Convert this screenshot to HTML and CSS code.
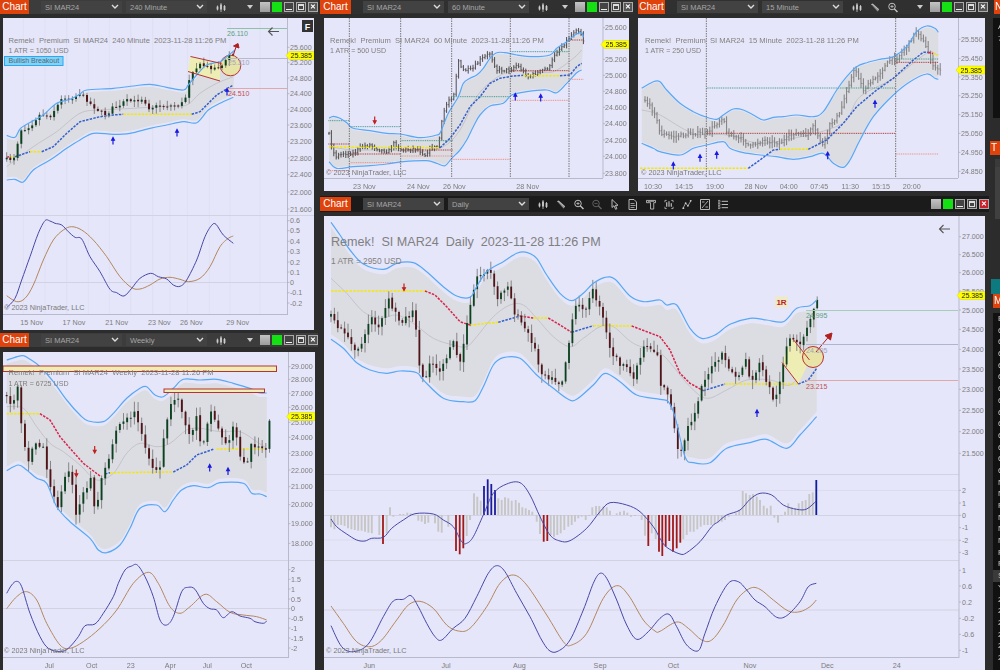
FILE: index.html
```html
<!DOCTYPE html>
<html lang="en">
<head>
<meta charset="utf-8">
<title>SI MAR24 charts</title>
<link rel="stylesheet" href="styles.css">
</head>
<body>
<svg class="sprite" aria-hidden="true">
  <symbol id="i-bars" viewBox="0 0 10 10"><path d="M1.5 3v5M5 .5v9M8.5 2.5v6" stroke="#ccc" fill="none" stroke-width=".8"/><path d="M.6 4h1.8v3H.6zM4.1 2h1.8v5H4.1zM7.6 3.5h1.8v4H7.6z" fill="#ccc"/></symbol>
  <symbol id="i-pencil" viewBox="0 0 11 10"><path d="M1 1.5l2-1 7 6.5-1.5 2.5z" fill="#bbb"/><path d="M2 2l7 6.5" stroke="#333" stroke-width=".6"/></symbol>
  <symbol id="i-plus" viewBox="0 0 11 11"><circle cx="4.4" cy="4.4" r="3.6" fill="none" stroke="#ccc"/><path d="M2.6 4.4h3.6M4.4 2.6v3.6" stroke="#ccc" stroke-width=".8"/><path d="M7 7l3.4 3.4" stroke="#ccc" stroke-width="1.5"/></symbol>
  <symbol id="i-minus" viewBox="0 0 11 11"><circle cx="4.4" cy="4.4" r="3.6" fill="none" stroke="#666"/><path d="M2.6 4.4h3.6" stroke="#666" stroke-width=".8"/><path d="M7 7l3.4 3.4" stroke="#666" stroke-width="1.5"/></symbol>
  <symbol id="i-cursor" viewBox="0 0 8 11"><path d="M1 .5v8l2-1.8 1.6 3.6 1.3-.6-1.5-3.4h2.6z" fill="none" stroke="#ccc" stroke-width=".9"/></symbol>
  <symbol id="i-doc" viewBox="0 0 10 11"><path d="M1 .5h5l2.5 2.5v7.5H1z" fill="none" stroke="#ccc" stroke-width=".9"/><path d="M2.5 4.5h4M2.5 6.5h5M2.5 8.5h4" stroke="#ccc" stroke-width=".7"/></symbol>
  <symbol id="i-prop" viewBox="0 0 11 11"><path d="M.5 1h10v2.5h-2v7H5v-7H.5z" fill="none" stroke="#ccc" stroke-width=".9"/><path d="M2 2.2h7" stroke="#ccc" stroke-width=".7"/></symbol>
  <symbol id="i-frame" viewBox="0 0 11 11"><path d="M1 3V1h2M8 1h2v2M10 8v2H8M3 10H1V8" fill="none" stroke="#ccc" stroke-width=".8"/><path d="M3 3v5M5.5 2v6M8 4v4" stroke="#ccc" stroke-width="1.2"/></symbol>
  <symbol id="i-line" viewBox="0 0 11 11"><path d="M1 10l3-6 2.5 3L10 1" fill="none" stroke="#ccc" stroke-width=".8"/><circle cx="1.5" cy="9.5" r="1" fill="#ccc"/><circle cx="4" cy="4" r="1" fill="#ccc"/><circle cx="6.5" cy="7" r="1" fill="#ccc"/><circle cx="9.5" cy="1.5" r="1" fill="#ccc"/></symbol>
  <symbol id="i-calc" viewBox="0 0 10 11"><path d="M.5.5h9v10h-9z" fill="none" stroke="#ccc" stroke-width=".9"/><path d="M2 9l6-7M2 3h2.5M5.5 8h2.5" stroke="#ccc" stroke-width=".8"/></symbol>
  <symbol id="i-list" viewBox="0 0 11 11"><path d="M0 1h2.2v2H0zM0 4.5h2.2v2H0zM0 8h2.2v2H0z" fill="none" stroke="#ccc" stroke-width=".7"/><path d="M4 2h7M4 5.5h7M4 9h7" stroke="#ccc" stroke-width="1"/></symbol>
  <symbol id="i-chev" viewBox="0 0 8 6"><path d="M1 1l3 3 3-3" fill="none" stroke="#ddd" stroke-width="1.4"/></symbol>
</svg>

<main class="desk">

  <section class="win w1">
    <header class="tb tb-grey">
      <span class="tab">Chart</span>
      <span class="sel sel-first"><span>SI MAR24</span><svg class="chev"><use href="#i-chev"/></svg></span>
      <span class="sel"><span>240 Minute</span><svg class="chev"><use href="#i-chev"/></svg></span>
      <svg class="ico ico-first"><use href="#i-bars"/></svg>
      <span class="winbtns">
        <span class="drop"></span><span class="b b-grey"></span><span class="b b-green"></span><span class="b b-min"></span><span class="b b-max"></span><span class="b b-close">✕</span>
      </span>
    </header>
    <div class="panel"><svg id="c1" width="311" height="309" viewBox="3 18 311 309"></svg></div>
  </section>

  <section class="win w2">
    <header class="tb tb-mid">
      <span class="tab tab-wide">Chart</span>
      <span class="sel sel-first"><span>SI MAR24</span><svg class="chev"><use href="#i-chev"/></svg></span>
      <span class="sel"><span>60 Minute</span><svg class="chev"><use href="#i-chev"/></svg></span>
      <svg class="ico ico-first"><use href="#i-bars"/></svg>
      <span class="winbtns">
        <span class="drop"></span><span class="b b-grey"></span><span class="b b-green"></span><span class="b b-min"></span><span class="b b-max"></span><span class="b b-close">✕</span>
      </span>
    </header>
    <div class="panel"><svg id="c2" width="305" height="172" viewBox="324 18 305 172"></svg></div>
  </section>

  <section class="win w3">
    <header class="tb tb-mid">
      <span class="tab tab-narrow">Chart</span>
      <span class="sel sel-first"><span>SI MAR24</span><svg class="chev"><use href="#i-chev"/></svg></span>
      <span class="sel"><span>15 Minute</span><svg class="chev"><use href="#i-chev"/></svg></span>
      <svg class="ico ico-first"><use href="#i-bars"/></svg>
      <svg class="ico"><use href="#i-pencil"/></svg>
      <svg class="ico"><use href="#i-plus"/></svg>
      <span class="winbtns">
        <span class="drop"></span><span class="b b-grey"></span><span class="b b-green"></span><span class="b b-min"></span><span class="b b-max"></span><span class="b b-close">✕</span>
      </span>
    </header>
    <div class="panel"><svg id="c3" width="347" height="172" viewBox="638 18 347 172"></svg></div>
  </section>

  <section class="win w4">
    <header class="tb tb-dark">
      <span class="tab tab-wide">Chart</span>
      <span class="sel sel-first"><span>SI MAR24</span><svg class="chev"><use href="#i-chev"/></svg></span>
      <span class="sel"><span>Daily</span><svg class="chev"><use href="#i-chev"/></svg></span>
      <svg class="ico ico-first"><use href="#i-bars"/></svg>
      <svg class="ico"><use href="#i-pencil"/></svg>
      <svg class="ico"><use href="#i-plus"/></svg>
      <svg class="ico"><use href="#i-minus"/></svg>
      <svg class="ico"><use href="#i-cursor"/></svg>
      <svg class="ico"><use href="#i-doc"/></svg>
      <svg class="ico"><use href="#i-prop"/></svg>
      <svg class="ico"><use href="#i-frame"/></svg>
      <svg class="ico"><use href="#i-line"/></svg>
      <svg class="ico"><use href="#i-calc"/></svg>
      <svg class="ico"><use href="#i-list"/></svg>
      <span class="winbtns">
        <span class="b b-grey"></span><span class="b b-green"></span><span class="b b-min"></span><span class="b b-max"></span><span class="b b-close b-red">✕</span>
      </span>
    </header>
    <div class="panel"><svg id="c4" width="661" height="454" viewBox="324 216 661 454"></svg></div>
  </section>

  <section class="win w5">
    <header class="tb tb-grey">
      <span class="tab">Chart</span>
      <span class="sel sel-first"><span>SI MAR24</span><svg class="chev"><use href="#i-chev"/></svg></span>
      <span class="sel"><span>Weekly</span><svg class="chev"><use href="#i-chev"/></svg></span>
      <svg class="ico ico-first"><use href="#i-bars"/></svg>
      <span class="winbtns">
        <span class="drop"></span><span class="b b-grey"></span><span class="b b-green"></span><span class="b b-min"></span><span class="b b-max"></span><span class="b b-close">✕</span>
      </span>
    </header>
    <div class="panel"><svg id="c5" width="312" height="318" viewBox="3 352 312 318"></svg></div>
  </section>

  <aside class="side">
    <div class="side-tab">N</div>
    <div class="side-box"><div class="row">A</div><div class="row">7</div></div>
    <div class="side-tab side-t">T</div>
    <div class="side-grey"></div>
    <div class="side-teal"></div>
    <div class="side-tab side-m">M</div>
    <div class="side-list">
      <div class="row">E</div><div class="row">6</div><div class="row">6</div><div class="row">6</div><div class="row">6</div><div class="row">6</div><div class="row">6</div><div class="row">6</div><div class="row">6</div><div class="row">6</div><div class="row">6</div><div class="row">6</div><div class="row">6</div><div class="row">6</div>
      <div class="row">N</div><div class="row">N</div><div class="row">R</div><div class="row">N</div><div class="row">N</div><div class="row">N</div><div class="row">R</div><div class="row">R</div><div class="row row-sel">S</div><div class="row">Y</div><div class="row">2</div><div class="row">2</div><div class="row">2</div><div class="row">2</div><div class="row">2</div><div class="row">2</div>
    </div>
  </aside>

</main>
<script src="script.js"></script>
</body>
</html>
```
FILE: styles.css
```css
* { box-sizing: border-box; }
html, body { margin: 0; padding: 0; height: 100%; overflow: hidden; background: #2c2c2c; }
body { font-family: "Liberation Sans", Arial, sans-serif; }
.sprite { position: absolute; width: 0; height: 0; }

.desk { position: relative; width: 1000px; height: 670px; overflow: hidden; filter: blur(.4px); }

.win { position: absolute; display: flex; flex-direction: column; }
.w1 { left: 0; top: 0; width: 318px; height: 330px; }
.w2 { left: 320px; top: 0; width: 313px; height: 191px; }
.w3 { left: 638px; top: 0; width: 350px; height: 191px; }
.w4 { left: 320px; top: 196px; width: 669px; height: 474px; }
.w5 { left: 0; top: 333px; width: 318px; height: 337px; }

.tb { height: 14px; flex: none; display: flex; align-items: center; }
.tb-grey { background: #3c3c3c; }
.tb-mid { background: #303030; }
.tb-dark { background: #1b1b1b; height: 16px; }
.w4 .tb { margin-bottom: 4px; }
.w1 .tb, .w2 .tb, .w3 .tb { margin-bottom: 4px; }
.w5 .tb { margin-bottom: 5px; }

.tab { flex: none; width: 29px; height: 14px; background: #e0420c; color: #fff; font-size: 10px; line-height: 14px; text-align: center; }
.tab-wide { width: 31px; }
.tab-narrow { width: 27px; }

.sel { flex: none; width: 81px; height: 12px; margin-left: 4px; padding: 0 3px 0 4px; background: #424242; color: #a6a6a6; font-size: 7.5px; display: flex; align-items: center; justify-content: space-between; }
.sel-first { margin-left: 12px; }
.chev { width: 8px; height: 6px; flex: none; }

.ico { width: 10px; height: 11px; flex: none; margin-left: 8px; }
.ico-first { margin-left: 9px; }

.winbtns { margin-left: auto; display: flex; align-items: center; gap: 2px; }
.drop { width: 0; height: 0; border: 3px solid transparent; border-top: 4px solid #ccc; border-bottom: 0; margin-right: 5px; }
.b { width: 10px; height: 10px; flex: none; position: relative; color: #fff; font-size: 8px; line-height: 10px; text-align: center; }
.b-grey { background: linear-gradient(#c4c4c4, #9c9c9c); }
.b-green { background: #14e014; }
.b-min, .b-max { background: #444; border: 1px solid #aaa; }
.b-min::after { content: ""; position: absolute; left: 1px; right: 1px; bottom: 1px; height: 1px; background: #eee; }
.b-max::after { content: ""; position: absolute; left: 1px; right: 1px; top: 1px; bottom: 1px; border: 1px solid #ddd; border-top-width: 2px; }
.b-close { background: #555; border: 1px solid #aaa; font-weight: bold; line-height: 8px; font-size: 7px; }
.b-red { background: #c8232c; }

.panel { background: #e6e6fa; flex: 1; min-height: 0; overflow: hidden; }
.w1 .panel { margin-left: 3px; width: 311px; }
.w2 .panel { margin-left: 4px; width: 305px; }
.w3 .panel { width: 347px; }
.w4 .panel { margin-left: 4px; width: 661px; }
.w5 .panel { margin-left: 3px; width: 312px; }
.panel svg { display: block; }

.t { fill: #808080; font-size: 7.6px; white-space: pre; }
.t-big { font-size: 12.6px; }
.t-atr { font-size: 7.1px; }
.t-atr-big { font-size: 8.35px; }
.ax { fill: #7c7c7c; font-size: 7.1px; }
.dt { fill: #7c7c7c; font-size: 7.2px; text-anchor: middle; }
.cp { fill: #7a7a7a; font-size: 7.3px; }
.lvl { font-size: 7px; }
.tagt { fill: #222; font-size: 7px; }
.ft { fill: #fff; font-size: 9px; font-weight: bold; text-anchor: middle; }
.bb { fill: #4a6a80; font-size: 7px; }
.r1 { fill: #b22; font-size: 8px; font-weight: bold; text-anchor: middle; }

.side { position: absolute; left: 990px; top: 0; width: 10px; height: 670px; display: flex; flex-direction: column; overflow: hidden; }
.side-tab { flex: none; height: 14px; margin-left: 4px; padding-left: 1px; background: #e0420c; color: #fff; font-size: 10px; line-height: 14px; }
.side-box { flex: none; height: 100px; margin: 4px 0 0 3px; background: #111; padding-top: 3px; }
.side-t { margin: 23px 0 0 0; }
.side-grey { flex: none; height: 60px; margin: 4px 0 0 5px; background: #404040; border-top: 8px solid #3a3a3a; }
.side-teal { flex: none; height: 15px; margin: 60px 0 0 1px; background: #0d7a80; }
.side-m { margin-left: 3px; }
.side-list { flex: none; height: 362px; margin: 5px 0 0 3px; background: #111; }
.row { height: 11.7px; padding-left: 5px; color: #c4c4c4; font-size: 8px; line-height: 11.7px; }
.row-sel { background: #3a3a3a; }
```
FILE: script.js
```javascript
const NS = 'http://www.w3.org/2000/svg';
const BLUE = '#58a8f4', MID = '#bdbdc2', SHADE = '#dcdce3', YEL = '#f6e800', TBLUE = '#3560cc', TRED = '#d8254c';
const TEAL = '#3d9c8e', LRED = '#b23030', PINK = '#ef8a7c';
const MACD = '#4848a8', SIG = '#b4875e';

function add(svg, tag, attrs, text) {
  const e = document.createElementNS(NS, tag);
  for (const k in attrs) e.setAttribute(k, attrs[k]);
  if (text !== undefined) e.textContent = text;
  svg.appendChild(e);
  return e;
}
const Z = (ox, oy) => list => list.map(([x, y]) => [ox + x / 3, oy + y / 3]);

function curve(p) {
  let d = '';
  for (let i = 0; i < p.length - 1; i++) {
    const a = p[Math.max(i - 1, 0)], b = p[i], c = p[i + 1], e = p[Math.min(i + 2, p.length - 1)];
    d += 'C' + (b[0] + (c[0] - a[0]) / 6).toFixed(1) + ' ' + (b[1] + (c[1] - a[1]) / 6).toFixed(1) + ' ' +
      (c[0] - (e[0] - b[0]) / 6).toFixed(1) + ' ' + (c[1] - (e[1] - b[1]) / 6).toFixed(1) + ' ' +
      c[0].toFixed(1) + ' ' + c[1].toFixed(1);
  }
  return d;
}
const start = p => 'M' + p[0][0].toFixed(1) + ' ' + p[0][1].toFixed(1);
function smooth(svg, p, stroke, w, dash) {
  const a = { d: start(p) + curve(p), fill: 'none', stroke, 'stroke-width': w };
  if (dash) a['stroke-dasharray'] = dash;
  add(svg, 'path', a);
}
function seg(svg, x1, y1, x2, y2, stroke, w, dash) {
  const a = { x1, y1, x2, y2, stroke, 'stroke-width': w };
  if (dash) a['stroke-dasharray'] = dash;
  add(svg, 'line', a);
}
function band(svg, up, low, off) {
  const u = up.map(([x, y]) => [x, y + off]), l = low.map(([x, y]) => [x, y - off]).reverse();
  add(svg, 'path', { d: start(u) + curve(u) + 'L' + l[0][0].toFixed(1) + ' ' + l[0][1].toFixed(1) + curve(l) + 'Z', fill: SHADE });
}
function interp(p, x) {
  if (x <= p[0][0]) return p[0][1];
  for (let i = 1; i < p.length; i++) {
    if (x <= p[i][0]) {
      const t = (x - p[i - 1][0]) / (p[i][0] - p[i - 1][0]);
      return p[i - 1][1] + t * (p[i][1] - p[i - 1][1]);
    }
  }
  return p[p.length - 1][1];
}
let seed = 7;
const rnd = () => (seed = (seed * 16807) % 2147483647) / 2147483647;

function candles(svg, path, step, amp, wick, w) {
  const x0 = path[0][0], x1 = path[path.length - 1][0];
  let prev = interp(path, x0);
  for (let x = x0; x <= x1 + .01; x += step) {
    const close = interp(path, x) + (rnd() - .5) * amp;
    const top = Math.min(prev, close), bot = Math.max(prev, close);
    const hi = top - rnd() * wick - 1, lo = bot + rnd() * wick + 1;
    seg(svg, x.toFixed(1), hi.toFixed(1), x.toFixed(1), lo.toFixed(1), '#7c7c7c', .9);
    add(svg, 'rect', { x: (x - w / 2).toFixed(1), y: top.toFixed(1), width: w, height: Math.max(bot - top, 1).toFixed(1), fill: close < prev ? '#0c4220' : '#4e1418' });
    prev = close + (rnd() - .5) * amp * .3;
  }
}
function ohlc(svg, path, step, amp, wick, col) {
  const x0 = path[0][0], x1 = path[path.length - 1][0];
  let prev = interp(path, x0);
  for (let x = x0; x <= x1 + .01; x += step) {
    const close = interp(path, x) + (rnd() - .5) * amp;
    const hi = Math.min(prev, close) - rnd() * wick - 1, lo = Math.max(prev, close) + rnd() * wick + 1;
    seg(svg, x.toFixed(1), hi.toFixed(1), x.toFixed(1), lo.toFixed(1), col, 1);
    seg(svg, (x - 1).toFixed(1), prev.toFixed(1), x.toFixed(1), prev.toFixed(1), col, .7);
    seg(svg, x.toFixed(1), close.toFixed(1), (x + 1).toFixed(1), close.toFixed(1), col, .7);
    prev = close;
  }
}
function trail(svg, parts) {
  parts.forEach(([c, p]) => {
    add(svg, 'polyline', { points: p.map(q => q[0].toFixed(1) + ',' + q[1].toFixed(1)).join(' '), fill: 'none', stroke: c, 'stroke-width': 1.5, 'stroke-dasharray': '2.5 1.2' });
  });
}
function levels(svg, list, color) {
  list.forEach(([x1, y, x2]) => seg(svg, x1, y, x2, y, color, 1, '1 .8'));
}
function arrow(svg, x, y, up, color) {
  const d = up ? `M${x} ${y + 3.5}V${y - 1}M${x - 1.4} ${y - .8}L${x} ${y - 3.5}L${x + 1.4} ${y - .8}Z`
    : `M${x} ${y - 3.5}V${y + 1}M${x - 1.4} ${y + .8}L${x} ${y + 3.5}L${x + 1.4} ${y + .8}Z`;
  add(svg, 'path', { d, stroke: color, fill: color, 'stroke-width': 1.2 });
}
function tag(svg, x, y, r) {
  add(svg, 'path', { d: `M${x} ${y}l3.5 -4H${r}v8H${x + 3.5}z`, fill: '#ffff00', stroke: '#d8d800', 'stroke-width': .5 });
  add(svg, 'text', { x: x + 4.5, y: y + 2.5, class: 'tagt' }, '25.385');
}
function back(svg, x, y) {
  add(svg, 'path', { d: `M${x + 11} ${y}H${x + .5}M${x + 4.5} ${y - 4}L${x + .5} ${y}L${x + 4.5} ${y + 4}`, fill: 'none', stroke: '#555', 'stroke-width': 1.1 });
}
function axis(svg, ax, top, bot, x, oy, labels) {
  seg(svg, ax, top, ax, bot, '#b9b9cc', 1);
  labels.forEach(([s, zy]) => {
    const y = oy + zy / 3;
    seg(svg, ax, y, ax + 2, y, '#a8a8bc', .7);
    add(svg, 'text', { x, y: (y + 2.5).toFixed(1), class: 'ax' }, s);
  });
}
function dates(svg, ox, y, list) {
  list.forEach(([s, zx]) => add(svg, 'text', { x: ox + zx / 3, y, class: 'dt' }, s));
}
function title(svg, x, y, s, cls) { add(svg, 'text', { x, y, class: 't ' + (cls || '') }, s); }
function copyright(svg, x, y) { add(svg, 'text', { x, y, class: 'cp' }, '© 2023 NinjaTrader, LLC'); }
function hline(svg, x1, x2, y, c) { seg(svg, x1, y, x2, y, c, 1); }

/* ---------- 240 Minute ---------- */
(function () {
  const s = document.getElementById('c1'), z = Z(0, 0), q = Z(0, 210);
  for (const x of [70, 135, 200, 265, 328, 392, 458, 510, 562, 628, 690, 780]) seg(s, x / 3, 18, x / 3, 314, '#dcdcf2', .7);
  const up = z([[20, 406], [45, 412], [62, 385], [100, 362], [130, 345], [170, 310], [210, 298], [240, 282], [260, 270], [340, 265], [400, 258], [450, 253], [500, 262], [550, 270], [565, 255], [590, 225], [620, 195], [660, 185], [680, 170], [705, 150]]);
  const low = z([[20, 540], [45, 538], [70, 546], [100, 510], [150, 480], [200, 445], [240, 420], [280, 400], [340, 403], [390, 400], [450, 385], [500, 375], [550, 365], [590, 368], [625, 330], [660, 310], [700, 292]]);
  band(s, up, low, 2.5);
  smooth(s, z([[20, 500], [100, 440], [170, 395], [240, 340], [300, 330], [400, 325], [500, 318], [560, 315], [600, 280], [650, 250], [700, 230]]), MID, .8);
  add(s, 'path', { d: 'M190 57L220 64V80L188 72Z', fill: '#eeeeb4' });
  add(s, 'circle', { cx: 230.5, cy: 65.5, r: 10.3, fill: '#e8e4a8', stroke: '#b83232', 'stroke-width': 1 });
  trail(s, [[TRED, z([[20, 472], [30, 470]])], [YEL, z([[30, 470], [45, 470]])], [TBLUE, z([[45, 470], [90, 455]])], [YEL, z([[90, 455], [125, 455]])],
    [TBLUE, z([[125, 455], [160, 440], [200, 400], [240, 365], [300, 350], [340, 345], [370, 343]])], [YEL, z([[370, 343], [575, 343]])],
    [TBLUE, z([[575, 343], [600, 335], [650, 285], [700, 255]])]]);
  candles(s, z([[20, 478], [40, 478], [50, 440], [62, 390], [80, 385], [100, 370], [115, 345], [130, 345], [150, 350], [170, 320], [190, 290], [210, 298], [240, 280], [260, 300], [280, 320], [300, 335], [320, 345], [340, 320], [360, 320], [375, 300], [400, 305], [430, 295], [445, 325], [470, 318], [500, 318], [540, 315], [555, 300], [565, 245], [575, 215], [600, 195], [640, 205], [670, 195], [690, 160], [700, 165]]), 3.65, 3, 5, 2);
  smooth(s, up, BLUE, 1.2); smooth(s, low, BLUE, 1.2);
  seg(s, 190.5, 56.5, 221.5, 63.5, '#b83232', 1); seg(s, 188, 71.5, 220, 81, '#b83232', 1);
  add(s, 'path', { d: 'M233 56L237 44M233.5 46L238 43.5L239 48Z', stroke: '#b02020', fill: '#b02020', 'stroke-width': 1 });
  hline(s, 227, 287, 28.5, '#8fc0a8'); hline(s, 227, 287, 58.5, '#b9b9cc'); hline(s, 227, 287, 88.5, '#e0a8a8');
  add(s, 'text', { x: 227, y: 35.5, class: 'lvl', fill: '#5aa080' }, '26.110');
  add(s, 'text', { x: 228, y: 65, class: 'lvl', fill: '#a0a4b8' }, '25.310');
  add(s, 'text', { x: 228, y: 95.5, class: 'lvl', fill: '#c05050' }, '24.510');
  for (const [x, y] of [[113, 141], [177, 133], [227, 92]]) arrow(s, x, y, true, '#1a1ae0');
  back(s, 268, 31.5);
  add(s, 'rect', { x: 302, y: 20, width: 11, height: 12, fill: '#333' });
  add(s, 'text', { x: 307.5, y: 29.5, class: 'ft' }, 'F');
  title(s, 8.5, 43, 'Remek!  Premium  SI MAR24  240 Minute  2023-11-28 11:26 PM');
  title(s, 8.5, 52.5, '1 ATR = 1050 USD', 't-atr');
  add(s, 'rect', { x: 4.5, y: 56.5, width: 58.5, height: 9, fill: '#84d2f6', stroke: '#2aa8f0', 'stroke-width': 1 });
  add(s, 'text', { x: 8.5, y: 63, class: 'bb' }, 'Bullish Breakout');
  axis(s, 287.5, 18, 215, 290, 0, [['25.600', 142], ['25.200', 188], ['24.800', 234], ['24.400', 281], ['24.000', 328], ['23.600', 375], ['23.200', 425], ['22.800', 474], ['22.400', 524], ['22.000', 576], ['21.600', 627]]);
  tag(s, 286, 55.5, 314);
  hline(s, 3, 314, 215.5, '#d2d2e2');
  hline(s, 3, 287, 282.5, '#d2d2e2');
  smooth(s, q([[20, 257], [50, 275], [75, 265], [100, 225], [130, 150], [160, 90], [190, 60], [215, 50], [245, 60], [280, 90], [320, 140], [360, 200], [395, 233], [420, 237], [450, 225], [480, 207], [510, 202], [540, 208], [565, 215], [600, 205], [630, 170], [660, 110], [685, 85], [700, 78]]), SIG, 1);
  smooth(s, q([[20, 293], [45, 265], [65, 210], [90, 140], [115, 70], [135, 32], [150, 33], [165, 40], [185, 45], [205, 65], [225, 82], [245, 87], [270, 140], [300, 185], [330, 238], [350, 248], [372, 258], [395, 235], [420, 205], [452, 190], [475, 200], [500, 207], [520, 225], [540, 229], [560, 210], [590, 150], [615, 80], [635, 46], [648, 43], [670, 75], [700, 100]]), MACD, 1);
  axis(s, 287.5, 215, 314, 290, 210, [['0.6', 32], ['0.5', 62], ['0.4', 94], ['0.3', 125], ['0.2', 156], ['0.1', 186], ['0', 217], ['-0.1', 248], ['-0.2', 279]]);
  hline(s, 3, 288, 314.5, '#b9b9cc');
  copyright(s, 4, 309.5);
  dates(s, 0, 324.5, [['15 Nov', 95], ['17 Nov', 222], ['21 Nov', 350], ['23 Nov', 478], ['26 Nov', 574], ['29 Nov', 713]]);
})();

/* ---------- 60 Minute ---------- */
(function () {
  const s = document.getElementById('c2'), z = Z(320, 0);
  const up = z([[27, 355], [40, 349], [60, 355], [80, 368], [100, 385], [150, 392], [200, 400], [240, 402], [300, 413], [350, 405], [362, 395], [385, 340], [415, 290], [430, 250], [450, 235], [470, 225], [490, 205], [510, 175], [530, 158], [555, 158], [590, 165], [640, 170], [690, 165], [710, 145], [740, 125], [765, 105], [785, 98], [790, 112]]);
  const low = z([[27, 485], [50, 505], [100, 500], [150, 497], [200, 492], [250, 485], [320, 482], [350, 490], [375, 497], [395, 475], [420, 450], [440, 420], [460, 380], [480, 345], [510, 318], [550, 310], [575, 285], [620, 275], [680, 270], [710, 278], [740, 250], [770, 218], [785, 210]]);
  band(s, up, low, 1.5);
  smooth(s, z([[27, 440], [100, 450], [200, 450], [300, 455], [370, 440], [420, 390], [470, 290], [520, 240], [570, 215], [640, 215], [700, 215], [760, 175], [785, 150]]), MID, .8);
  const lv = list => list.map(([a, y, b]) => [320 + a / 3, y / 3, 320 + b / 3]);
  levels(s, lv([[92, 488, 243], [245, 468, 398], [398, 478, 572], [575, 301, 748], [750, 238, 790], [25, 512, 90]]), PINK);
  ohlc(s, z([[27, 400], [35, 440], [45, 470], [70, 460], [100, 460], [125, 440], [150, 435], [180, 450], [205, 455], [220, 430], [245, 450], [290, 445], [315, 465], [330, 445], [355, 440], [360, 400], [370, 340], [385, 300], [400, 290], [415, 180], [425, 210], [455, 210], [480, 180], [510, 160], [530, 210], [570, 210], [590, 195], [625, 230], [660, 215], [690, 200], [705, 160], [725, 140], [750, 110], [770, 85], [785, 105], [793, 130]]), 2.4, 3, 2.5, '#4e4e4e');
  trail(s, [[YEL, z([[27, 440], [100, 442], [360, 443]])], [TBLUE, z([[360, 443], [390, 415], [420, 375], [450, 320], [480, 290], [510, 250], [540, 235], [580, 228], [610, 226]])], [YEL, z([[610, 227], [720, 227]])], [TBLUE, z([[720, 227], [750, 225], [770, 200], [785, 190]])]]);
  levels(s, lv([[25, 362, 90], [92, 380, 243], [245, 422, 398], [398, 290, 572], [575, 155, 748]]), TEAL);
  levels(s, lv([[25, 432, 90], [92, 462, 243], [245, 450, 398], [575, 212, 748], [750, 120, 790]]), LRED);
  smooth(s, up, BLUE, 1.2); smooth(s, low, BLUE, 1.2);
  for (const x of [88, 242, 395, 571, 747]) seg(s, 320 + x / 3, 18, 320 + x / 3, 178, '#5a5a5a', .8, '1.5 1');
  arrow(s, 374.7, 120, false, '#c02020');
  arrow(s, 515.3, 97, true, '#1a1ae0'); arrow(s, 540.7, 98, true, '#1a1ae0');
  title(s, 330, 42.5, 'Remek!  Premium  SI MAR24  60 Minute  2023-11-28 11:26 PM');
  title(s, 330, 52.5, '1 ATR = 500 USD', 't-atr');
  axis(s, 603, 18, 178, 605, 0, [['25.600', 83], ['25.200', 178], ['25.000', 226], ['24.800', 274], ['24.600', 322], ['24.400', 371], ['24.200', 420], ['24.000', 469], ['23.800', 520]]);
  tag(s, 601, 44.5, 629);
  hline(s, 324, 603, 178.5, '#b9b9cc');
  copyright(s, 326, 175);
  dates(s, 320, 188.5, [['23 Nov', 133], ['24 Nov', 295], ['26 Nov', 403], ['28 Nov', 623]]);
})();

/* ---------- 15 Minute ---------- */
(function () {
  const s = document.getElementById('c3'), z = Z(660, 0);
  const up = z([[-55, 265], [-20, 245], [0, 245], [20, 270], [60, 310], [100, 335], [140, 352], [170, 358], [190, 345], [220, 327], [250, 330], [280, 345], [310, 360], [340, 352], [370, 350], [410, 345], [460, 350], [490, 335], [530, 270], [560, 230], [590, 200], [620, 188], [660, 178], [700, 170], [740, 140], [770, 95], [800, 78], [825, 85], [835, 97]]);
  const low = z([[-55, 430], [-20, 445], [0, 455], [60, 465], [100, 445], [140, 435], [190, 425], [210, 445], [250, 458], [300, 465], [350, 470], [400, 478], [450, 470], [490, 460], [520, 490], [550, 502], [570, 480], [600, 420], [640, 350], [700, 285], [750, 245], [800, 222], [825, 235], [835, 238]]);
  band(s, up, low, 1.5);
  smooth(s, z([[-55, 330], [0, 345], [100, 400], [200, 405], [300, 430], [400, 415], [500, 390], [560, 360], [600, 290], [700, 235], [800, 160], [830, 165]]), MID, .8);
  ohlc(s, z([[-45, 300], [-15, 340], [0, 400], [40, 410], [100, 400], [140, 400], [170, 370], [190, 350], [200, 400], [250, 420], [270, 440], [310, 420], [360, 430], [400, 400], [440, 405], [460, 380], [490, 440], [505, 380], [540, 340], [560, 270], [585, 205], [610, 270], [650, 230], [690, 180], [710, 175], [740, 140], [770, 90], [790, 125], [810, 170], [820, 205], [845, 208]]), 2.4, 3, 5, '#7e7e7e');
  const lv = list => list.map(([a, y, b]) => [660 + a / 3, y / 3, 660 + b / 3]);
  levels(s, lv([[707, 462, 835]]), PINK);
  levels(s, lv([[140, 264, 707], [707, 177, 835]]), TEAL);
  levels(s, lv([[140, 400, 707], [707, 187, 835]]), LRED);
  trail(s, [[YEL, z([[-60, 505], [265, 505]])], [TBLUE, z([[265, 505], [300, 480], [340, 450], [360, 448]])], [YEL, z([[360, 448], [445, 448]])], [TBLUE, z([[445, 448], [500, 420], [550, 370], [590, 320], [650, 270], [700, 235], [760, 180], [790, 157], [805, 157]])], [TRED, z([[805, 157], [820, 161]])], [YEL, z([[820, 161], [835, 165]])]]);
  smooth(s, up, BLUE, 1.2); smooth(s, low, BLUE, 1.2);
  for (const x of [139, 707]) seg(s, 660 + x / 3, 18, 660 + x / 3, 178, '#5a5a5a', .8, '1.5 1');
  for (const [x, y] of [[40, 498], [120, 475], [170, 466], [503, 467], [645, 313]]) arrow(s, (660 + x / 3).toFixed(1) * 1, (y / 3).toFixed(1) * 1, true, '#1a1ae0');
  title(s, 645, 42.5, 'Remek!  Premium  SI MAR24  15 Minute  2023-11-28 11:26 PM');
  title(s, 645, 52.5, '1 ATR = 250 USD', 't-atr');
  axis(s, 958.5, 18, 178, 961, 0, [['25.550', 118], ['25.450', 175], ['25.350', 231], ['25.250', 287], ['25.150', 344], ['25.050', 400], ['24.950', 457], ['24.850', 514]]);
  tag(s, 956, 70, 985);
  hline(s, 638, 958, 178.5, '#b9b9cc');
  copyright(s, 641, 175);
  dates(s, 660, 188.5, [['10:30', -21], ['14:15', 72], ['19:00', 165], ['28 Nov', 288], ['04:00', 386], ['07:45', 478], ['11:30', 571], ['15:15', 663], ['20:00', 755]]);
})();

/* ---------- Daily ---------- */
(function () {
  const s = document.getElementById('c4');
  const a = Z(320, 190), b = Z(660, 190), c = Z(320, 470), d = Z(660, 470);
  const up = a([[33, 97], [60, 135], [90, 180], [130, 222], [190, 238], [230, 220], [280, 218], [320, 245], [370, 290], [410, 318], [450, 322], [470, 290], [500, 245], [550, 215], [590, 190], [620, 187], [650, 205], [680, 255], [720, 310], [755, 332], [790, 310], [820, 280], [855, 262], [885, 268], [930, 318], [970, 335], [1020, 330]]).concat(b([[20, 345], [50, 345], [90, 415], [125, 445], [165, 435], [210, 403], [270, 385], [320, 390], [370, 395], [410, 355], [450, 347], [470, 330]]));
  const low = a([[33, 448], [70, 475], [110, 518], [150, 540], [200, 550], [240, 543], [290, 548], [310, 570], [370, 625], [430, 635], [465, 632], [490, 590], [520, 525], [550, 503], [600, 505], [650, 555], [700, 595], [745, 628], [770, 628], [820, 585], [855, 550], [900, 575], [950, 615], [1020, 628]]).concat(b([[25, 635], [45, 680], [75, 800], [100, 818], [150, 818], [200, 775], [270, 758], [320, 748], [380, 775], [420, 735], [470, 680]]));
  band(s, up, low, 5);
  smooth(s, a([[33, 265], [80, 310], [130, 365], [180, 385], [230, 375], [280, 400], [340, 445], [400, 465], [440, 470], [470, 440], [520, 380], [570, 345], [610, 345], [650, 385], [700, 440], [750, 470], [790, 445], [840, 410], [880, 410], [940, 460], [1020, 490]]).concat(b([[40, 530], [90, 590], [140, 625], [200, 600], [260, 570], [330, 570], [390, 585], [430, 540], [470, 490]])), MID, .8);
  add(s, 'path', { d: 'M781.7 362.3L792.3 338.3L810 360L798.3 384Z', fill: '#eeeeb4' });
  add(s, 'circle', { cx: 813, cy: 357, r: 10.5, fill: '#e8e4a8', stroke: '#b83232', 'stroke-width': 1 });
  trail(s, [[YEL, a([[33, 303], [315, 303]])], [TRED, a([[315, 303], [345, 315], [380, 350], [420, 395], [450, 405]])], [YEL, a([[450, 405], [535, 397]])], [TBLUE, a([[535, 397], [600, 378]])], [TRED, a([[600, 378], [640, 384]])], [YEL, a([[640, 384], [685, 384]])], [TRED, a([[685, 384], [720, 405], [755, 427]])], [TBLUE, a([[755, 427], [820, 407]])], [YEL, a([[820, 407], [935, 408]])], [TRED, a([[935, 408], [1020, 440]]).concat(b([[30, 480], [60, 550], [90, 580], [130, 602]]))], [TBLUE, b([[130, 602], [195, 582]])], [YEL, b([[195, 582], [415, 582]])], [TBLUE, b([[415, 582], [445, 570], [470, 535]])]]);
  candles(s, a([[33, 380], [50, 410], [80, 430], [105, 490], [135, 440], [150, 375], [175, 420], [205, 330], [240, 395], [285, 365], [295, 520], [315, 580], [325, 510], [360, 540], [400, 460], [420, 520], [450, 355], [470, 260], [510, 240], [530, 330], [565, 280], [580, 360], [605, 400], [640, 460], [660, 540], [700, 570], [725, 580], [745, 470], [765, 350], [800, 350], [820, 300], [850, 390], [870, 480], [900, 520], [940, 560], [975, 460], [1020, 500]]).concat(b([[0, 580], [25, 610], [40, 690], [50, 780], [65, 790], [80, 720], [100, 680], [130, 570], [185, 495], [230, 570], [260, 500], [270, 580], [300, 520], [345, 640], [365, 540], [385, 445], [420, 470], [450, 395], [470, 330], [480, 315]])), 3.4, 6, 9, 1.8);
  smooth(s, up, BLUE, 1.2); smooth(s, low, BLUE, 1.2);
  seg(s, 792.5, 338.5, 809.5, 360, '#b83232', 1); seg(s, 782, 362.5, 798.5, 384, '#b83232', 1);
  add(s, 'path', { d: 'M816 352L831 334M825 335.5L832 333L830.5 340Z', stroke: '#b02020', fill: '#b02020', 'stroke-width': 1 });
  hline(s, 806, 958, 310.5, '#a8ccb8'); hline(s, 806, 958, 344.5, '#b0b4cc'); hline(s, 806, 958, 380.5, '#e0a8a8');
  add(s, 'text', { x: 806, y: 318, class: 'lvl', fill: '#5aa080' }, '24.995');
  add(s, 'text', { x: 806, y: 353, class: 'lvl', fill: '#a0a4b8' }, '24.105');
  add(s, 'text', { x: 806, y: 389, class: 'lvl', fill: '#c05050' }, '23.215');
  add(s, 'rect', { x: 775, y: 296.5, width: 13, height: 11, fill: '#eeeac8' });
  add(s, 'text', { x: 781.5, y: 305, class: 'r1' }, '1R');
  arrow(s, 404, 287, false, '#c02020');
  arrow(s, 757, 413.5, true, '#1a1ae0');
  back(s, 939, 229);
  title(s, 331, 246, 'Remek!  SI MAR24  Daily  2023-11-28 11:26 PM', 't-big');
  title(s, 331, 264, '1 ATR = 2950 USD', 't-atr-big');
  axis(s, 959, 216, 474, 962, 190, [['27.000', 140], ['26.500', 194], ['26.000', 248], ['25.500', 303], ['25.000', 360], ['24.500', 418], ['24.000', 478], ['23.500', 537], ['23.000', 598], ['22.500', 661], ['22.000', 725], ['21.500', 790]]);
  tag(s, 957, 295.5, 985);
  /* MACD */
  hline(s, 324, 959, 474.5, '#d2d2e2'); hline(s, 324, 959, 560.5, '#d2d2e2');
  hline(s, 324, 959, 490.5, '#dcdcee'); hline(s, 324, 959, 515.5, '#d2d2e2'); hline(s, 324, 959, 540, '#dcdcee'); hline(s, 324, 959, 610, '#d2d2e2');
  const hist = (conv, list, col, w) => conv(list.map(([x, y]) => [x, y])).forEach(([x, y]) => seg(s, x.toFixed(1), 515, x.toFixed(1), y.toFixed(1), col, w));
  const gc = [];
  [172, 178, 165, 165, 168, 175, 178, 180, 182, 182, 185, 188, 190].forEach((y, i) => gc.push([33 + 10.2 * i, y]));
  gc.push([178, 195], [200, 190], [210, 112], [220, 140], [240, 132], [250, 132], [262, 128], [272, 130], [295, 152], [305, 155], [315, 162], [325, 158], [345, 160], [355, 185], [365, 188], [385, 170], [440, 198], [450, 150], [462, 70], [472, 80], [482, 92], [535, 85], [545, 90], [555, 82], [565, 85], [575, 92], [587, 90], [597, 98], [607, 112], [617, 115], [627, 120], [637, 125], [650, 155], [660, 192], [692, 195], [702, 200], [712, 195], [722, 190], [733, 180], [745, 170], [755, 165], [765, 155], [775, 145], [785, 140], [797, 150], [807, 138], [817, 112], [828, 108], [838, 108], [850, 110], [860, 112], [870, 122], [890, 130], [900, 125], [912, 122], [922, 128], [933, 140], [945, 138], [965, 150], [975, 197], [995, 190], [1007, 207]);
  hist(c, gc, '#c6c6c6', 1.9);
  hist(d, [[70, 208], [80, 195], [91, 185], [101, 185], [112, 178], [122, 170], [133, 165], [143, 165], [154, 165], [164, 162], [175, 158], [185, 155], [195, 150], [206, 140], [228, 130], [238, 120], [248, 63], [258, 70], [269, 75], [279, 72], [290, 80], [300, 90], [311, 107], [321, 115], [332, 107], [343, 143], [354, 158], [364, 138], [375, 125], [385, 100], [395, 112], [406, 115], [416, 100], [427, 93], [437, 90], [448, 72], [458, 67]], '#c6c6c6', 1.9);
  hist(c, [[189, 222], [408, 243], [419, 253], [430, 235], [671, 215], [682, 213], [985, 228], [1017, 245]], '#a01818', 1.8);
  hist(d, [[7, 258], [17, 230], [28, 213], [39, 245], [50, 235], [61, 218]], '#a01818', 1.8);
  hist(c, [[492, 48], [503, 28], [514, 42], [525, 60]], '#1c1c9c', 1.8);
  hist(d, [[469, 30]], '#0e1e9c', 1.8);
  smooth(s, c([[33, 147], [50, 170], [80, 192], [110, 210], [135, 213], [155, 205], [190, 202], [215, 175], [250, 150], [285, 131], [340, 132], [370, 150], [400, 170], [425, 215], [440, 220], [460, 200], [490, 135], [520, 70], [560, 42], [600, 38], [630, 75], [660, 140], [690, 195], [720, 213], [750, 212], [800, 175], [840, 125], [870, 98], [920, 105], [960, 125], [1000, 170], [1020, 205]]).concat(d([[20, 232], [60, 252], [80, 248], [120, 215], [155, 170], [175, 155], [200, 135], [240, 120], [270, 88], [300, 70], [335, 75], [370, 105], [410, 118], [440, 117], [469, 93]])), MACD, 1);
  axis(s, 959, 474, 560, 962, 470, [['2', 61], ['1', 99], ['0', 136], ['-1', 173], ['-2', 211], ['-3', 247]]);
  /* Stochastic */
  smooth(s, c([[33, 408], [70, 460], [110, 515], [150, 530], [185, 510], [230, 450], [265, 405], [300, 394], [340, 415], [380, 465], [415, 483], [450, 475], [500, 410], [540, 340], [580, 315], [620, 345], [680, 435], [730, 515], [755, 525], [800, 490], [850, 385], [890, 347], [925, 375], [970, 450], [1005, 483], [1020, 484]]).concat(d([[50, 456], [85, 475], [125, 510], [155, 510], [190, 465], [230, 390], [270, 355], [300, 358], [340, 390], [385, 423], [420, 425], [450, 410], [469, 390]])), SIG, 1);
  smooth(s, c([[33, 467], [65, 530], [100, 545], [145, 522], [190, 440], [220, 393], [250, 388], [273, 377], [295, 410], [320, 460], [345, 500], [365, 510], [400, 475], [435, 445], [470, 380], [505, 310], [530, 287], [555, 305], [590, 370], [630, 440], [665, 510], [690, 543], [715, 543], [750, 510], [790, 420], [820, 340], [840, 310], [860, 325], [890, 390], [920, 465], [950, 508], [985, 485], [1020, 445]]).concat(d([[27, 433], [50, 470], [80, 525], [115, 542], [135, 490], [165, 410], [205, 340], [235, 335], [260, 360], [285, 390], [315, 410], [350, 442], [380, 437], [420, 395], [445, 350], [469, 340]])), MACD, 1);
  axis(s, 959, 560, 658, 962, 470, [['1', 301], ['0.6', 348], ['0.2', 396], ['-0.2', 445], ['-0.6', 493], ['-1', 541]]);
  hline(s, 324, 959, 657.5, '#b9b9cc');
  copyright(s, 326, 653);
  dates(s, 320, 668, [['Jun', 148], ['Jul', 378], ['Aug', 598], ['Sep', 840]]);
  dates(s, 660, 668, [['Oct', 40], ['Nov', 270], ['Dec', 502], ['24', 710]]);
})();

/* ---------- Weekly ---------- */
(function () {
  const s = document.getElementById('c5'), z = Z(0, 320);
  const up = z([[20, 120], [45, 112], [70, 107], [90, 118], [120, 140], [160, 185], [200, 240], [240, 285], [265, 303], [310, 305], [340, 280], [380, 235], [420, 205], [440, 200], [465, 225], [490, 230], [520, 205], [550, 178], [600, 180], [650, 178], [700, 190], [750, 205], [775, 218], [800, 219]]);
  const low = z([[20, 452], [55, 435], [80, 450], [110, 475], [140, 490], [170, 560], [210, 605], [270, 655], [295, 690], [320, 698], [360, 675], [390, 625], [420, 565], [470, 555], [495, 575], [520, 540], [545, 510], [580, 497], [625, 503], [660, 488], [730, 490], [755, 520], [780, 522], [800, 530]]);
  band(s, up, low, 4);
  smooth(s, z([[20, 260], [70, 265], [110, 320], [150, 370], [190, 395], [240, 435], [290, 480], [340, 460], [380, 400], [420, 370], [470, 380], [510, 370], [560, 330], [600, 325], [660, 335], [720, 335], [770, 365], [800, 385]]), MID, .8);
  trail(s, [[YEL, z([[20, 281], [120, 281]])], [TRED, z([[120, 281], [150, 300], [180, 350], [210, 385], [250, 430], [300, 468]])], [TBLUE, z([[315, 462], [330, 458]])], [YEL, z([[330, 458], [520, 456]])], [TBLUE, z([[520, 456], [560, 435], [590, 405], [640, 388]])], [YEL, z([[650, 387], [795, 387]])]]);
  candles(s, z([[20, 225], [30, 260], [45, 230], [55, 185], [65, 320], [85, 430], [100, 370], [130, 380], [150, 500], [175, 570], [190, 470], [210, 440], [228, 590], [250, 520], [275, 470], [285, 580], [310, 450], [330, 400], [350, 320], [380, 290], [410, 280], [430, 370], [460, 450], [480, 450], [495, 330], [510, 260], [540, 230], [550, 300], [570, 350], [590, 290], [605, 390], [630, 265], [660, 340], [685, 380], [700, 310], [720, 400], [740, 440], [755, 370], [780, 380], [795, 410], [805, 325], [812, 290]]), 3.65, 6, 9, 1.9);
  smooth(s, up, BLUE, 1.2); smooth(s, low, BLUE, 1.2);
  add(s, 'rect', { x: 3, y: 366, width: 273.5, height: 5.5, fill: '#eeeeb4', stroke: '#b83232', 'stroke-width': 1 });
  add(s, 'rect', { x: 164, y: 389, width: 100.5, height: 3.5, fill: '#eeeeb4', stroke: '#b83232', 'stroke-width': 1 });
  arrow(s, 94.7, 449.5, false, '#c02020'); arrow(s, 76.3, 473, false, '#c02020');
  arrow(s, 209.7, 468, true, '#1a1ae0'); arrow(s, 228, 471.5, true, '#1a1ae0');
  title(s, 8.5, 375, 'Remek!  Premium  SI MAR24  Weekly  2023-11-28 11:26 PM');
  title(s, 8.5, 385.5, '1 ATR = 6725 USD', 't-atr');
  axis(s, 288.5, 352, 560, 291, 320, [['29.000', 140], ['28.000', 178], ['27.000', 220], ['26.000', 262], ['25.000', 307], ['24.000', 352], ['23.000', 400], ['22.000', 450], ['21.000', 500], ['20.000', 554], ['19.000', 611], ['18.000', 670]]);
  tag(s, 286.5, 416.5, 315);
  hline(s, 3, 315, 560.5, '#d2d2e2');
  hline(s, 3, 288, 608.5, '#d2d2e2');
  smooth(s, z([[20, 866], [50, 830], [80, 815], [110, 840], [140, 910], [180, 975], [210, 985], [250, 965], [300, 925], [350, 870], [400, 790], [445, 757], [475, 790], [510, 860], [540, 880], [570, 860], [615, 823], [650, 845], [690, 877], [730, 885], [770, 890], [800, 900]]), SIG, 1);
  smooth(s, z([[20, 820], [35, 795], [50, 784], [65, 800], [90, 880], [120, 950], [145, 985], [180, 995], [205, 985], [235, 950], [255, 917], [285, 912], [310, 880], [340, 830], [355, 790], [375, 750], [395, 738], [412, 735], [435, 770], [460, 830], [480, 900], [500, 915], [520, 890], [545, 815], [565, 802], [585, 808], [610, 850], [630, 866], [650, 870], [670, 893], [695, 875], [720, 888], [750, 895], [765, 905], [790, 910], [800, 903]]), MACD, 1);
  axis(s, 288.5, 560, 658, 291, 320, [['2', 749], ['1.5', 778], ['1', 807], ['0.5', 837], ['0', 866], ['-0.5', 895], ['-1', 924], ['-1.5', 954], ['-2', 984]]);
  hline(s, 3, 289, 657.5, '#b9b9cc');
  copyright(s, 4, 653);
  dates(s, 0, 668, [['Jul', 148], ['Oct', 275], ['23', 392], ['Apr', 511], ['Jul', 622], ['Oct', 739]]);
})();
```
